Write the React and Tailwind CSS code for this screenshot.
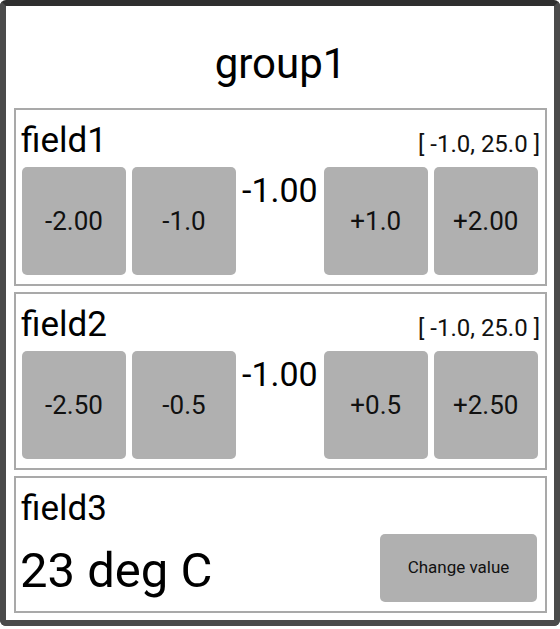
import React from "react";

function Btn({ label }) {
  return (
    <div className="w-[104px] h-[108px] shrink-0 rounded-[5px] bg-[#b0b0b0] flex items-center justify-center text-[26px] text-[#111]">
      {label}
    </div>
  );
}

function StepField({ name, steps }) {
  return (
    <div className="border-2 border-[#a9a9a9] pl-[6px] pr-[8px] pt-[11px] pb-[9px]">
      <div className="h-[40px] flex items-end justify-between leading-[40px]">
        <span className="text-[35px] text-black -ml-[1px]">{name}</span>
        <span className="text-[24px] text-[#111] leading-[28px] pb-[3px] -mr-[3px]">[ -1.0, 25.0 ]</span>
      </div>
      <div className="mt-[6px] flex gap-[6px]">
        <Btn label={steps[0]} />
        <Btn label={steps[1]} />
        <div className="flex-1 flex justify-center pt-[3px] text-[34px] leading-[40px] text-black">-1.00</div>
        <Btn label={steps[2]} />
        <Btn label={steps[3]} />
      </div>
    </div>
  );
}

export default function App() {
  return (
    <div className="w-[560px] h-[629px] bg-white font-['Roboto',sans-serif]">
      <div className="w-[560px] h-[626px] border-[6px] border-[#4b4b4b] border-t-[#2f2f2f] rounded-[6px] flex flex-col pl-[8px] pr-[7px]">
        <div className="h-[102px] pt-[34px] text-center text-[42px] leading-[48px] text-black">group1</div>
        <div className="flex flex-col gap-[6px]">
          <StepField name="field1" steps={["-2.00", "-1.0", "+1.0", "+2.00"]} />
          <StepField name="field2" steps={["-2.50", "-0.5", "+0.5", "+2.50"]} />
          <div className="border-2 border-[#a9a9a9] pl-[6px] pr-[8px] pt-[11px] pb-[7px]">
            <div className="h-[40px] text-[35px] leading-[40px] text-black -ml-[1px]">field3</div>
            <div className="mt-[5px] flex items-center justify-between">
              <span className="text-[49px] leading-[56px] text-black mt-[4px] -ml-[2px]">23 deg C</span>
              <div className="w-[157px] h-[68px] mb-[2px] rounded-[5px] bg-[#b0b0b0] flex items-center justify-center text-[17px] text-[#111]">
                Change value
              </div>
            </div>
          </div>
        </div>
      </div>
    </div>
  );
}
